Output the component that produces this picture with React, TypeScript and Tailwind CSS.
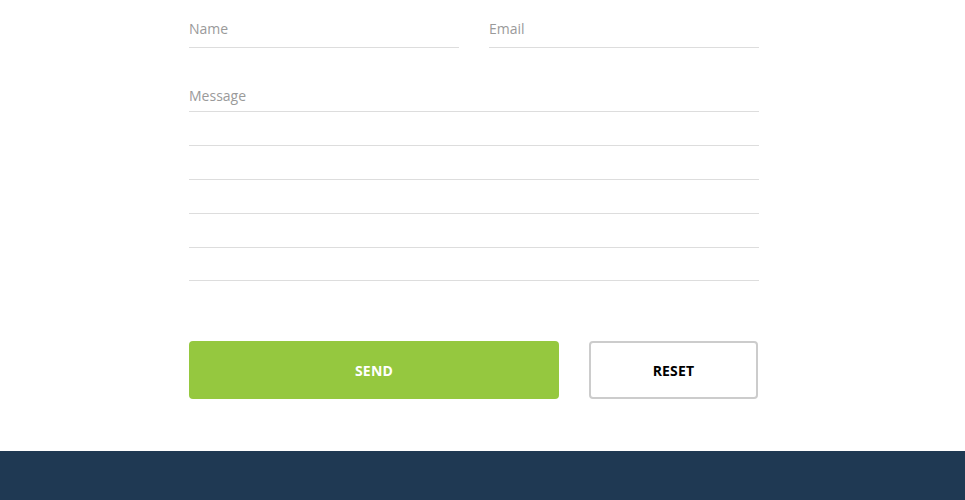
import React from "react";

export default function App() {
  const font = { fontFamily: '"Open Sans", "Noto Sans", sans-serif' };
  return (
    <div className="w-[965px] h-[500px] bg-white flex flex-col overflow-hidden" style={font}>
      <div className="ml-[189px] w-[570px] pt-[10px]">
        <div className="flex gap-[30px]">
          <input
            placeholder="Name"
            className="w-[270px] h-[38px] border-b border-[#dddddd] text-[14px] text-[#555] placeholder:text-[#9a9a9a] outline-none bg-transparent p-0"
          />
          <input
            placeholder="Email"
            className="w-[270px] h-[38px] border-b border-[#dddddd] text-[14px] text-[#555] placeholder:text-[#9a9a9a] outline-none bg-transparent p-0"
          />
        </div>
        <div className="mt-[33px] flex flex-col">
          <div className="h-[31px] pb-[2px] border-b border-[#dddddd] text-[14px] text-[#9a9a9a] flex items-center">
            Message
          </div>
          <div className="h-[34px] border-b border-[#dddddd]" />
          <div className="h-[34px] border-b border-[#dddddd]" />
          <div className="h-[34px] border-b border-[#dddddd]" />
          <div className="h-[34px] border-b border-[#dddddd]" />
          <div className="h-[33px] border-b border-[#dddddd]" />
        </div>
        <div className="mt-[60px] flex gap-[30px]">
          <button className="w-[370px] h-[58px] rounded-[4px] bg-[#95c83f] text-white text-[14px] font-bold tracking-[0.2px]">
            SEND
          </button>
          <button className="w-[169px] h-[58px] rounded-[4px] border-2 border-[#cccccc] bg-white text-black text-[14px] font-bold tracking-[0.2px]">
            RESET
          </button>
        </div>
      </div>
      <div className="mt-[52px] flex-1 bg-[#1f3953]" />
    </div>
  );
}
